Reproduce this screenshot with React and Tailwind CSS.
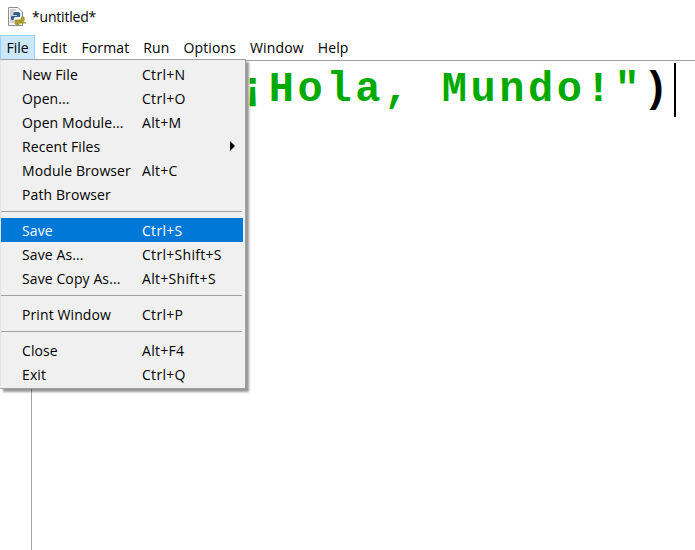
const fileItems = [
  [
    { label: 'New File', keys: 'Ctrl+N' },
    { label: 'Open...', keys: 'Ctrl+O' },
    { label: 'Open Module...', keys: 'Alt+M' },
    { label: 'Recent Files', arrow: true },
    { label: 'Module Browser', keys: 'Alt+C' },
    { label: 'Path Browser' },
  ],
  [
    { label: 'Save', keys: 'Ctrl+S', active: true },
    { label: 'Save As...', keys: 'Ctrl+Shift+S' },
    { label: 'Save Copy As...', keys: 'Alt+Shift+S' },
  ],
  [{ label: 'Print Window', keys: 'Ctrl+P' }],
  [
    { label: 'Close', keys: 'Alt+F4' },
    { label: 'Exit', keys: 'Ctrl+Q' },
  ],
];

const menus = ['Edit', 'Format', 'Run', 'Options', 'Window', 'Help'];

function IdleIcon() {
  return (
    <svg width="19" height="19" viewBox="0 0 19 19" className="shrink-0">
      <path d="M.5 .5H10L14.5 5V18.5H.5Z" fill="#f6f6f6" stroke="#8f8f8f" />
      <path d="M2 3H8M2 5H6M2 7H5M2 9H4M2 11H4M2 13H4M2 15H6" stroke="#a9a9a9" />
      <path d="M7.5 5C6 5 5.2 5.8 5.2 6.8V8H9V8.8H4.6C3.6 8.8 3 9.6 3 11C3 12.4 3.6 13.2 4.6 13.2H5.8V11.8C5.8 10.8 6.6 10.1 7.6 10.1H10.8C11.6 10.1 12.2 9.5 12.2 8.7V6.8C12.2 5.8 11.2 5 10 5Z" fill="#2f5f94" />
      <path d="M13 9.5V11C13 12 12.2 12.6 11.2 12.6H8C7.2 12.6 6.6 13.2 6.6 14V16.3C6.6 17.4 7.6 18 9 18H11.2V16.6H17.8V15H14.8C15.8 15 16.6 14.2 16.6 13V11C16.6 10 15.8 9.5 14.8 9.5Z" fill="#a89a2a" />
    </svg>
  );
}

export default function App() {
  return (
    <div className="relative flex h-[550px] w-[695px] flex-col overflow-hidden bg-white font-['Open_Sans','Liberation_Sans',sans-serif] text-[14px] text-black">
      <div className="flex h-[35px] items-center gap-[5px] pb-[3px] pl-[8px]">
        <IdleIcon />
        <span className="tracking-[-0.2px]">*untitled*</span>
      </div>

      <div className="flex h-[26px] items-stretch border-b border-[#a0a0a0]">
        <div className="flex w-[35px] items-center justify-center border border-[#99d1ff] bg-[#cce8ff]">File</div>
        {menus.map((name) => (
          <div key={name} className="flex items-center px-[7px] tracking-[0.13px]">{name}</div>
        ))}
      </div>

      <div className="flex min-h-0 flex-1">
        <div className="w-[32px] shrink-0 border-r border-[#a0a0a0]" />
        <div className="flex h-[58px] flex-1 items-center pl-[208px] font-['Liberation_Mono',monospace] text-[42px] font-bold leading-none tracking-[3.6px] whitespace-pre">
          <span className="text-[#00aa00]">¡Hola, Mundo!"</span>
          <span>)</span>
          <span className="ml-[2px] h-[54px] w-[2px] bg-black" />
        </div>
      </div>

      <div className="absolute left-0 top-[59px] w-[246px] border border-[#a0a0a0] border-l-[#e4e4e4] bg-[#f0f0f0] py-[2px] shadow-[3px_3px_2px_rgba(0,0,0,0.4)]">
        {fileItems.map((group, i) => (
          <div key={i}>
            {i > 0 && <div className="mb-[6px] mr-[3px] mt-[5px] h-px bg-[#a0a0a0]" />}
            {group.map((item) => (
              <div
                key={item.label}
                className={`relative mr-[2px] flex h-[24px] items-center ${item.active ? 'bg-[#0078d7] text-white' : ''}`}
              >
                <span className="w-[141px] shrink-0 pl-[21px] tracking-[0.1px]">{item.label}</span>
                {item.keys && <span className="tracking-[0.3px]">{item.keys}</span>}
                {item.arrow && (
                  <span className="absolute left-[229px] top-[7px] h-0 w-0 border-y-[5px] border-l-[5px] border-y-transparent border-l-black" />
                )}
              </div>
            ))}
          </div>
        ))}
      </div>
    </div>
  );
}
